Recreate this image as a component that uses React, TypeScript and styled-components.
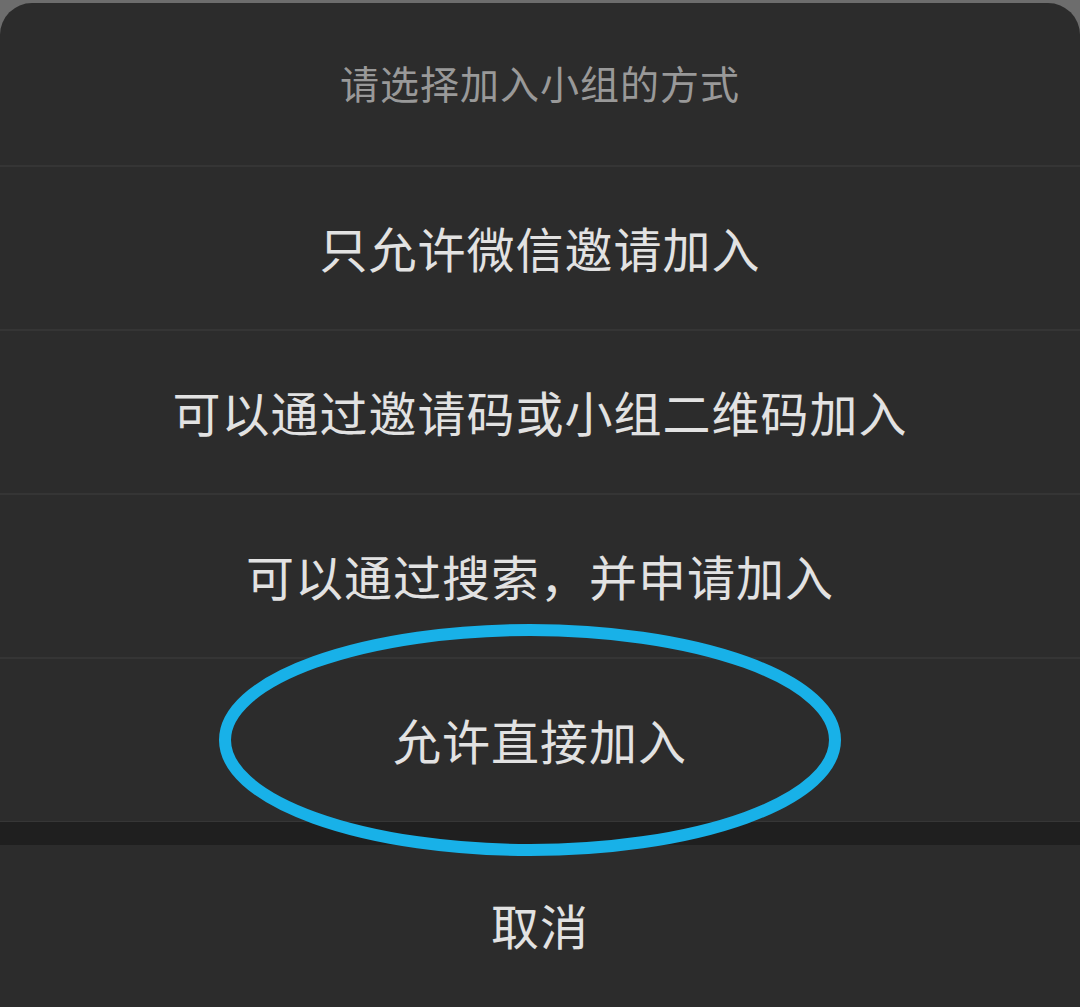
import React from "react";
import styled, { createGlobalStyle } from "styled-components";

const GlobalStyle = createGlobalStyle`
  html, body {
    margin: 0;
    padding: 0;
    background: #6d6d6d;
  }
  body {
    font-family: "Noto Sans CJK SC", "Noto Sans", sans-serif;
  }
`;

const options = [
  "只允许微信邀请加入",
  "可以通过邀请码或小组二维码加入",
  "可以通过搜索，并申请加入",
  "允许直接加入",
];

export default function App() {
  return (
    <>
      <GlobalStyle />
      <Page>
        <Sheet>
          <Title>请选择加入小组的方式</Title>
          {options.map((label) => (
            <Option key={label}>{label}</Option>
          ))}
          <Gap />
          <Cancel>取消</Cancel>
          <Highlight viewBox="0 0 630 240" aria-hidden>
            <ellipse
              cx="315"
              cy="118"
              rx="305"
              ry="110"
              fill="none"
              stroke="#18b1e8"
              strokeWidth="12"
            />
          </Highlight>
        </Sheet>
      </Page>
    </>
  );
}

const Page = styled.div`
  width: 1080px;
  height: 1007px;
  padding-top: 3px;
  box-sizing: border-box;
  overflow: hidden;
`;

const Sheet = styled.div`
  position: relative;
  height: 1004px;
  background: #2c2c2c;
  border-radius: 32px 32px 0 0;
  display: flex;
  flex-direction: column;
`;

const Title = styled.div`
  height: 162px;
  display: flex;
  align-items: center;
  justify-content: center;
  padding-bottom: 4px;
  box-sizing: border-box;
  font-size: 39px;
  letter-spacing: 1px;
  color: #999999;
`;

const Option = styled.div`
  height: 164px;
  box-sizing: border-box;
  border-top: 2px solid #353535;
  display: flex;
  align-items: center;
  justify-content: center;
  padding-bottom: 3px;
  font-size: 48px;
  letter-spacing: 1px;
  color: #e2e2e2;
`;

const Gap = styled.div`
  height: 24px;
  background: #1f1f1f;
  border-top: 1px solid #363636;
  box-sizing: border-box;
`;

const Cancel = styled(Option)`
  height: 162px;
  border-top: none;
  padding-bottom: 4px;
`;

const Highlight = styled.svg`
  position: absolute;
  left: 215px;
  top: 619px;
  width: 630px;
  height: 240px;
  pointer-events: none;
`;
